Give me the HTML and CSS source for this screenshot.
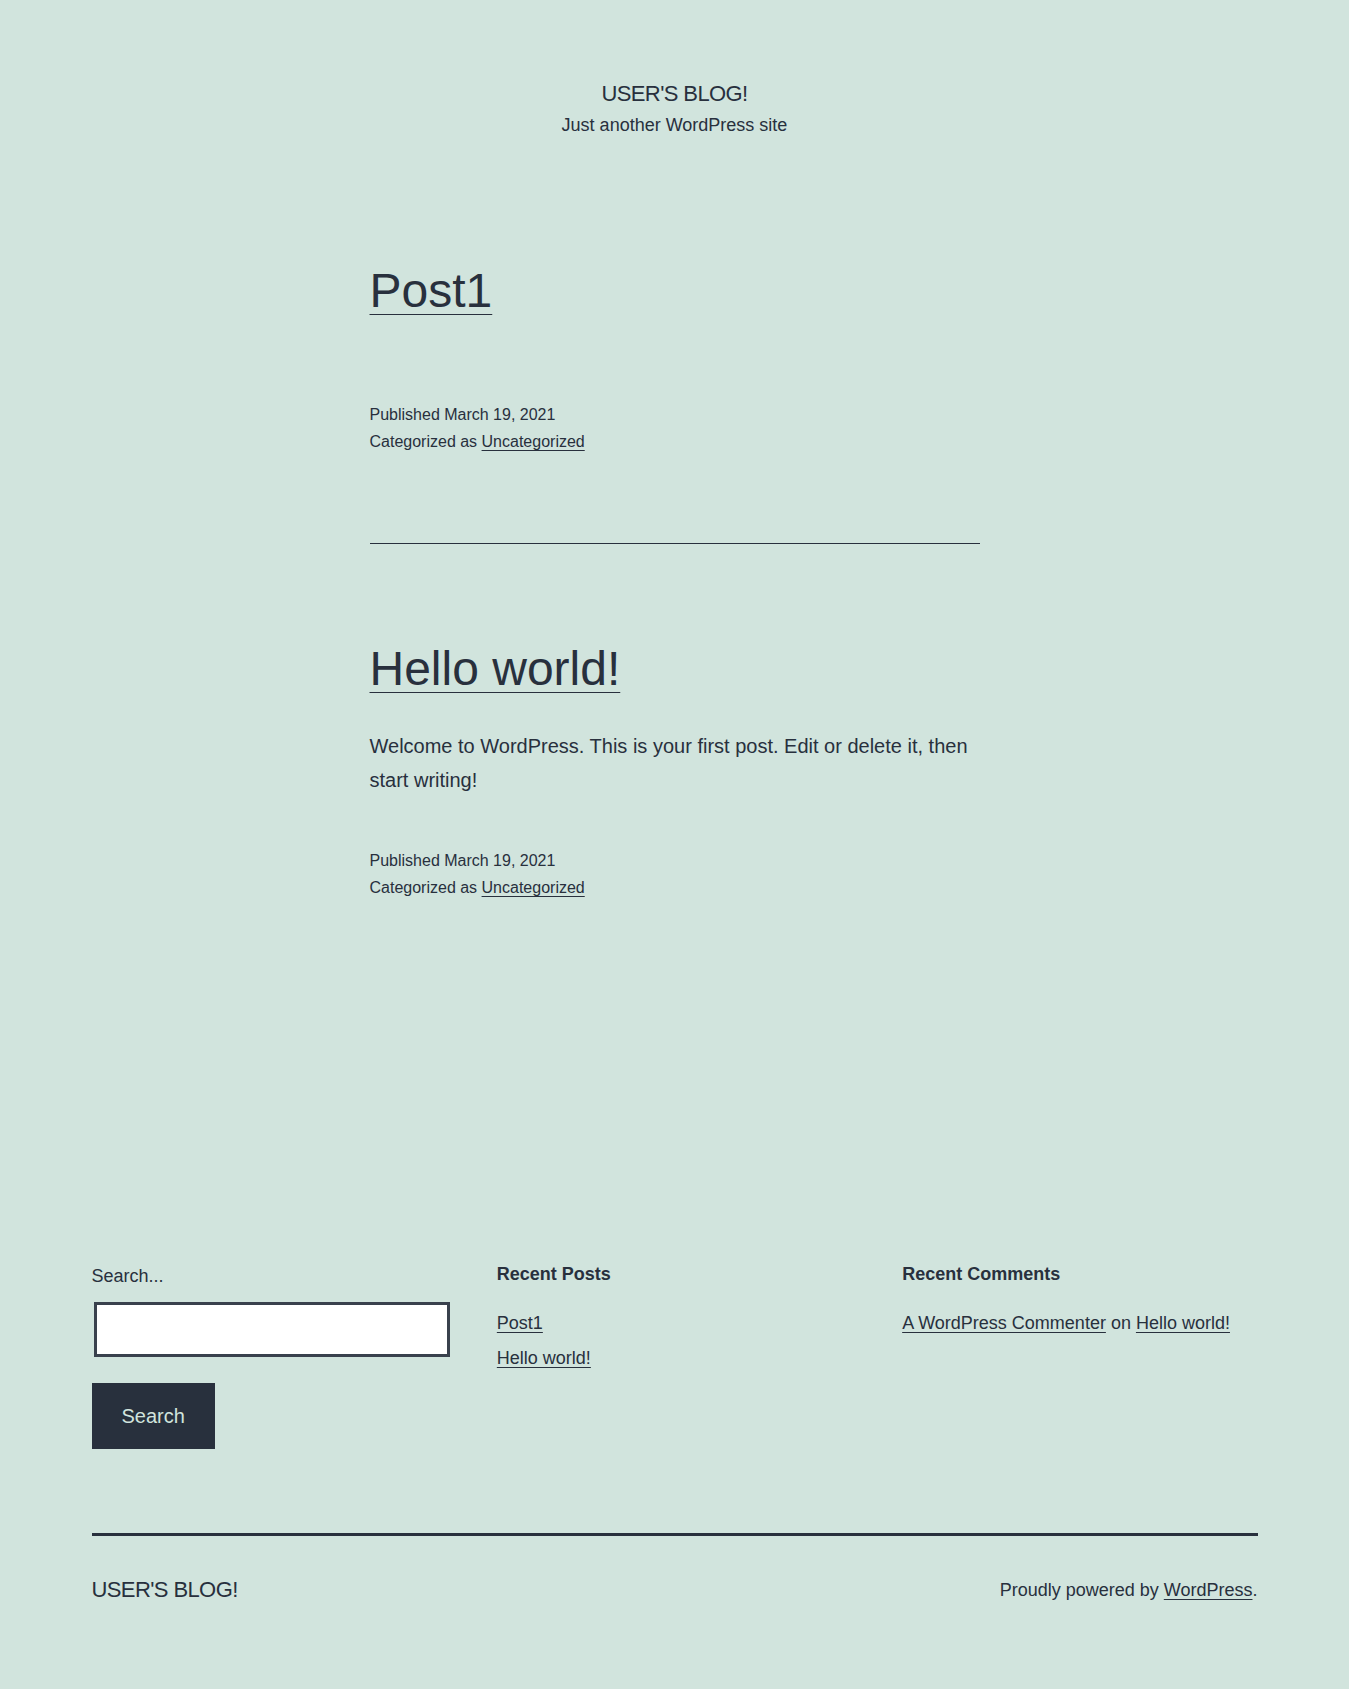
FILE: index.html
```html
<!DOCTYPE html>
<html lang="en">
<head>
<meta charset="utf-8">
<title>USER'S BLOG!</title>
<link rel="stylesheet" href="styles.css">
</head>
<body>
<header class="site-header">
  <p class="site-title">USER'S BLOG!</p>
  <p class="site-description">Just another WordPress site</p>
</header>

<main class="site-main">
  <article class="post post-first">
    <h2 class="entry-title"><a href="#">Post1</a></h2>
    <footer class="entry-footer">
      <div class="meta-line">Published March 19, 2021</div>
      <div class="meta-line">Categorized as <a href="#">Uncategorized</a></div>
    </footer>
  </article>

  <hr class="post-sep">

  <article class="post post-second">
    <h2 class="entry-title"><a href="#">Hello world!</a></h2>
    <div class="entry-content">
      <p>Welcome to WordPress. This is your first post. Edit or delete it, then start writing!</p>
    </div>
    <footer class="entry-footer entry-footer-after-content">
      <div class="meta-line">Published March 19, 2021</div>
      <div class="meta-line">Categorized as <a href="#">Uncategorized</a></div>
    </footer>
  </article>
</main>

<footer class="site-footer">
  <div class="widget-area">
    <section class="widget widget-search">
      <label class="search-label" for="s">Search...</label>
      <input class="search-field" id="s" type="search">
      <button class="search-submit" type="button">Search</button>
    </section>
    <section class="widget">
      <h2 class="widget-title">Recent Posts</h2>
      <ul class="widget-list">
        <li><a href="#">Post1</a></li>
        <li><a href="#">Hello world!</a></li>
      </ul>
    </section>
    <section class="widget">
      <h2 class="widget-title">Recent Comments</h2>
      <ul class="widget-list">
        <li><a href="#">A WordPress Commenter</a> on <a href="#">Hello world!</a></li>
      </ul>
    </section>
  </div>
  <div class="site-info">
    <div class="footer-title">USER'S BLOG!</div>
    <div class="powered-by">Proudly powered by <a href="#">WordPress</a>.</div>
  </div>
</footer>
</body>
</html>
```
FILE: styles.css
```css
html {
  background: #d1e4dd;
}

body {
  margin: 0;
  background: #d1e4dd;
  color: #28303d;
  font-family: "Liberation Sans", Arial, sans-serif;
  font-size: 20px;
  line-height: 1.7;
}

a {
  color: #28303d;
  text-decoration: underline;
  text-decoration-thickness: 1px;
  text-underline-offset: 3px;
}

.site-header {
  padding-top: 77.3px;
  text-align: center;
}

.site-title {
  margin: 0;
  font-size: 22px;
  line-height: 33.6px;
  letter-spacing: -0.6px;
}

.site-description {
  margin: 2px 0 0;
  font-size: 18px;
  line-height: 25.2px;
}

.site-main {
  width: 610px;
  margin: 0 auto;
}

.entry-title {
  margin: 0;
  font-size: 48px;
  font-weight: normal;
  line-height: 62.4px;
}

.entry-title a {
  text-underline-offset: 7px;
}

.post-first .entry-title {
  margin-top: 122.1px;
}

.post-second .entry-title {
  margin-top: 93.7px;
}

.entry-footer {
  margin-top: 78.3px;
  font-size: 16px;
  line-height: 27.2px;
}

.entry-footer-after-content {
  margin-top: 50.1px;
}

.entry-content p {
  margin: 28.2px 0 0;
  font-size: 20px;
  line-height: 34px;
}

.post-sep {
  margin: 88.2px 0 0;
  border: 0;
  height: 1px;
  background: #28303d;
}

.site-footer {
  width: 1166px;
  margin: 0 auto;
  padding-top: 357.9px;
  padding-bottom: 82px;
}

.widget-area {
  display: grid;
  grid-template-columns: repeat(3, minmax(0, 1fr));
  column-gap: 50px;
  align-items: start;
}

.widget {
  font-size: 18px;
  line-height: 30.6px;
}

.widget-search {
  display: flex;
  flex-direction: column;
  align-items: flex-start;
}

.search-label {
  margin-top: 2px;
  font-size: 18px;
  line-height: 30.6px;
}

.search-field {
  box-sizing: border-box;
  width: 356px;
  height: 55.6px;
  margin: 9.9px 0 0 2px;
  padding: 10px;
  border: 3px solid #39414d;
  border-radius: 0;
  background: #ffffff;
  font-family: inherit;
  font-size: 18px;
  color: #28303d;
}

.search-submit {
  box-sizing: border-box;
  height: 66px;
  margin-top: 26px;
  padding: 15px 27px;
  border: 3px solid #28303d;
  border-radius: 0;
  background: #28303d;
  color: #d1e4dd;
  font-family: inherit;
  font-size: 20px;
  line-height: 30px;
}

.widget-title {
  margin: 0;
  font-size: 18px;
  font-weight: bold;
  line-height: 30.6px;
}

.widget-list {
  list-style: none;
  margin: 18.7px 0 0;
  padding: 0;
  display: flex;
  flex-direction: column;
  gap: 4.4px;
}

.site-info {
  margin-top: 84.2px;
  border-top: 3px solid #28303d;
  padding-top: 36.7px;
  display: flex;
  justify-content: space-between;
  align-items: center;
}

.footer-title {
  font-size: 22px;
  line-height: 33.6px;
  letter-spacing: -0.6px;
}

.powered-by {
  font-size: 18px;
  line-height: 30.6px;
}
```
